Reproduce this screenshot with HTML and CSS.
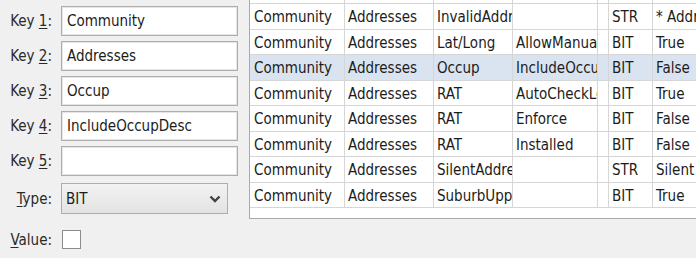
FILE: index.html
```html
<!DOCTYPE html>
<html>
<head>
<meta charset="utf-8">
<link rel="stylesheet" href="styles.css">
</head>
<body>
<div class="app">
  <div class="form">
    <div class="row r-key"><label class="lbl">Key <u>1</u>:</label><div class="field">Community</div></div>
    <div class="row r-key"><label class="lbl">Key <u>2</u>:</label><div class="field">Addresses</div></div>
    <div class="row r-key"><label class="lbl">Key <u>3</u>:</label><div class="field">Occup</div></div>
    <div class="row r-key"><label class="lbl">Key <u>4</u>:</label><div class="field">IncludeOccupDesc</div></div>
    <div class="row r-key"><label class="lbl">Key <u>5</u>:</label><div class="field"></div></div>
    <div class="row r-type"><label class="lbl"><u>T</u>ype:</label>
      <div class="select"><span>BIT</span>
        <svg class="chev" width="12" height="8" viewBox="0 0 12 8"><path d="M1.5 1.5 L6 6 L10.5 1.5" fill="none" stroke="#404040" stroke-width="2.4"/></svg>
      </div>
    </div>
    <div class="row r-val"><label class="lbl"><u>V</u>alue:</label><div class="check"></div></div>
  </div>
  <div class="table">
    <div class="grid">
      <div class="c hd"></div><div class="c hd"></div><div class="c hd"></div><div class="c hd"></div><div class="c hd"></div><div class="c hd"></div><div class="c hd"></div>

      <div class="c">Community</div><div class="c">Addresses</div><div class="c">InvalidAddress</div><div class="c"></div><div class="c"></div><div class="c">STR</div><div class="c">* Address is invalid</div>
      <div class="c">Community</div><div class="c">Addresses</div><div class="c">Lat/Long</div><div class="c">AllowManualEntry</div><div class="c"></div><div class="c">BIT</div><div class="c">True</div>
      <div class="c sel">Community</div><div class="c sel">Addresses</div><div class="c sel">Occup</div><div class="c sel">IncludeOccupDesc</div><div class="c sel"></div><div class="c sel">BIT</div><div class="c sel">False</div>
      <div class="c">Community</div><div class="c">Addresses</div><div class="c">RAT</div><div class="c">AutoCheckLocation</div><div class="c"></div><div class="c">BIT</div><div class="c">True</div>
      <div class="c">Community</div><div class="c">Addresses</div><div class="c">RAT</div><div class="c">Enforce</div><div class="c"></div><div class="c">BIT</div><div class="c">False</div>
      <div class="c">Community</div><div class="c">Addresses</div><div class="c">RAT</div><div class="c">Installed</div><div class="c"></div><div class="c">BIT</div><div class="c">False</div>
      <div class="c">Community</div><div class="c">Addresses</div><div class="c">SilentAddressMode</div><div class="c"></div><div class="c"></div><div class="c">STR</div><div class="c">Silent mode</div>
      <div class="c">Community</div><div class="c">Addresses</div><div class="c">SuburbUpperCase</div><div class="c"></div><div class="c"></div><div class="c">BIT</div><div class="c">True</div>
    </div>
  </div>
</div>
</body>
</html>
```
FILE: styles.css
```css
html, body {
  margin: 0;
  padding: 0;
  background: #f0f0f0;
  overflow: hidden;
}
body {
  width: 696px;
  height: 258px;
  font-family: "DejaVu Sans Condensed", "DejaVu Sans", sans-serif;
  font-size: 15px;
  color: #1c1c1c;
}
.app {
  display: flex;
  align-items: flex-start;
}
.form {
  width: 249px;
  flex: none;
  display: flex;
  flex-direction: column;
  padding-top: 6px;
}
.row {
  display: flex;
  align-items: center;
}
.r-key {
  height: 30px;
  margin-bottom: 5px;
}
.r-type {
  height: 31px;
  margin-top: 2px;
}
.r-val {
  height: 19px;
  margin-top: 16px;
}
.lbl {
  width: 52px;
  text-align: right;
  margin-right: 9px;
  color: #2a2a2a;
  white-space: nowrap;
}
.lbl u {
  text-decoration-thickness: 1px;
  text-underline-offset: 2px;
}
.field {
  box-sizing: border-box;
  width: 177px;
  height: 30px;
  background: #fff;
  border: 1px solid #adadad;
  box-shadow: inset 0 0 0 1px #e6e6e6;
  padding: 0 5px;
  line-height: 28px;
  white-space: nowrap;
  overflow: hidden;
}
.select {
  box-sizing: border-box;
  width: 167px;
  height: 31px;
  border: 1px solid #adadad;
  background: linear-gradient(#f2f2f2, #e3e3e3);
  display: flex;
  align-items: center;
  justify-content: space-between;
  padding: 0 6px 0 4px;
}
.chev {
  display: block;
  margin-top: 1px;
}
.check {
  box-sizing: border-box;
  width: 19px;
  height: 19px;
  margin-left: 1px;
  background: #fff;
  border: 1px solid #8c8c8c;
}
.table {
  flex: 1;
  box-sizing: border-box;
  height: 219px;
  background: #fff;
  border-left: 1px solid #a9a9a9;
  border-bottom: 1px solid #a9a9a9;
  overflow: hidden;
}
.grid {
  display: grid;
  grid-template-columns: 95px 89px 79px 85px 11px 44px 140px;
  grid-template-rows: 4px repeat(8, 25.5px);
}
.c {
  box-sizing: border-box;
  border-right: 1px solid #d6d6d6;
  border-bottom: 1px solid #d6d6d6;
  padding: 2px 0 0 3px;
  white-space: nowrap;
  overflow: hidden;
  display: flex;
  align-items: center;
  color: #1c1c1c;
}
.hd {
  padding: 0;
}
.c:nth-child(7n+1) {
  padding-left: 4px;
}
.sel {
  background: #dae4f0;
}
```
